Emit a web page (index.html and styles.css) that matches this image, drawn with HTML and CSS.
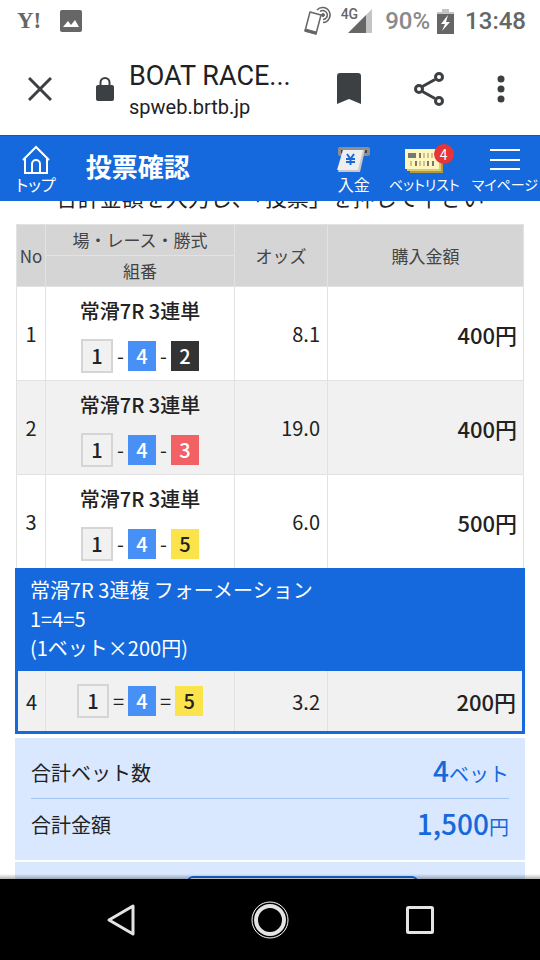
FILE: index.html
```
<!DOCTYPE html>
<html lang="ja">
<head>
    <meta charset="UTF-8">
    <meta name="viewport" content="width=device-width, initial-scale=1.0">
    <title>投票確認</title>
    <link rel="stylesheet" href="styles.css">
</head>
<body>
    <div class="status-bar">
        <span class="yahoo">Y!</span>
        <svg class="photo" width="22" height="22" viewBox="0 0 22 22">
            <rect width="22" height="22" rx="2" fill="#666"/>
            <path d="M3 17l5-6 3 4 4-5 4 7z" fill="#fff"/>
        </svg>
        <span class="spacer"></span>
        <svg width="30" height="30" viewBox="0 0 30 30" fill="none" stroke="#666">
            <path d="M17 5.5a4.5 4.5 0 1 1 3 8M14 4a7.5 7.5 0 1 1 6 12.500" stroke-width="1.5"/>
            <path d="M7 6l11 3-5 19-11-3z" stroke-width="1.5" stroke-linejoin="round" fill="#fff"/>
            <path d="M2.500 23l11 3-.5 2-11-3z" fill="#666"/>
            <circle cx="20" cy="9" r="1.500" fill="#666"/>
        </svg>
        <span class="network">4G</span>
        <svg width="25" height="24" viewBox="0 0 25 24">
            <path d="M18 6l6-6v24h-6z" fill="#c4c4c4"/>
            <path d="M0 24L18 6v18z" fill="#666"/>
        </svg>
        <span class="percent">90%</span>
        <svg class="battery" width="17" height="25" viewBox="0 0 17 25">
            <path d="M5 0h7v3h5v5H0V3h5z" fill="#c4c4c4"/>
            <path d="M0 5h17v20H0z" fill="#666"/>
            <path d="M11 6L4 15h4l-3 7 8-9H9z" fill="#fff"/>
        </svg>
        <span class="clock">13:48</span>
    </div>

    <div class="browser-bar">
        <button type="button" class="close" aria-label="閉じる">
            <svg width="24" height="24" viewBox="0 0 24 24" fill="none" stroke="#3c4043" stroke-width="3">
                <path d="M1 1l22 22M23 1L1 23"/>
            </svg>
        </button>
        <svg class="lock" width="18" height="24" viewBox="0 0 18 24">
            <rect y="8" width="18" height="16" rx="2" fill="#3c4043"/>
            <path d="M4.5 9V5.5a4.5 4.5 0 0 1 9 0V9" fill="none" stroke="#3c4043" stroke-width="2"/>
        </svg>
        <div class="address">
            <div class="page-title">BOAT RACE...</div>
            <div class="page-host">spweb.brtb.jp</div>
        </div>
        <div class="browser-actions">
            <button type="button" aria-label="ブックマーク">
                <svg width="24" height="31" viewBox="0 0 24 31">
                    <path d="M3 0h18a3 3 0 0 1 3 3v28l-12-5-12 5V3a3 3 0 0 1 3-3z" fill="#3c4043"/>
                </svg>
            </button>
            <button type="button" aria-label="共有">
                <svg width="32" height="34" viewBox="0 0 32 34" fill="none" stroke="#3c4043" stroke-width="3">
                    <path d="M8.5 15L22 7.5M8.5 19L22 26.5"/>
                    <circle cx="6" cy="17" r="3.5"/>
                    <circle cx="26" cy="5" r="3.5"/>
                    <circle cx="26" cy="29" r="3.5"/>
                </svg>
            </button>
            <button type="button" aria-label="メニュー">
                <svg width="8" height="28" viewBox="0 0 8 28" fill="#3c4043">
                    <circle cx="4" cy="4" r="3.5"/>
                    <circle cx="4" cy="14" r="3.5"/>
                    <circle cx="4" cy="24" r="3.5"/>
                </svg>
            </button>
        </div>
    </div>

    <header class="app-header">
        <a href="#" class="nav-item home">
            <svg width="28" height="29" viewBox="0 0 28 29" fill="none" stroke="#fff" stroke-width="2">
                <path d="M1 15L14 2l13 13M3 13v15h22V13M10 28v-9a4 4 0 0 1 8 0v9"/>
            </svg>
            <span>トップ</span>
        </a>
        <h1>投票確認</h1>
        <nav class="menu">
            <a href="#" class="nav-item deposit">
                <svg width="34" height="29" viewBox="0 0 34 29">
                    <rect x="1" y="2" width="32" height="9" rx="2" fill="#8f8f8f"/>
                    <rect x="4" y="5" width="26" height="3" fill="#444"/>
                    <path d="M6 5h22l-5 22H1z" fill="#c8c8c8"/>
                    <path d="M6 5h20l-5 20H0z" fill="#eee"/>
                    <path d="M10 9l3.5 5L17 9M9 14h9M9 17h9M13.5 14v6" fill="none" stroke="#1669dc" stroke-width="2"/>
                </svg>
                <span>入金</span>
            </a>
            <a href="#" class="nav-item small-label">
                <svg width="44" height="29" viewBox="0 0 44 29">
                    <path d="M8 10h33v18H8z" fill="#b39b3c"/>
                    <path d="M5 8h34v18H5z" fill="#dcc970"/>
                    <path d="M3 4h34v20H3z" fill="#fff6bf"/>
                    <path d="M6 8h8v5H6zM17 8h2v5h-2zM13 16h2v5h-2zM25 16h2v5h-2zM30 16h2v5h-2z" fill="#777"/>
                    <path d="M21 8h2v5h-2zM25 8h2v5h-2zM29 8h2v5h-2zM8 16h2v5H8zM17 16h2v5h-2zM21 16h2v5h-2z" fill="#ccc391"/>
                </svg>
                <b class="badge">4</b>
                <span>ベットリスト</span>
            </a>
            <a href="#" class="nav-item small-label">
                <svg width="30" height="29" viewBox="0 0 30 29" stroke="#fff" stroke-width="2">
                    <path d="M0 5h30M0 15h30M0 24h30"/>
                </svg>
                <span>マイページ</span>
            </a>
        </nav>
    </header>

    <main>
        <p class="notice">合計金額を入力し、「投票」を押して下さい</p>

        <table class="bets">
            <colgroup>
                <col class="col-no">
                <col class="col-race">
                <col class="col-odds">
                <col>
            </colgroup>
            <thead>
                <tr>
                    <th rowspan="2">No</th>
                    <th>場・レース・勝式</th>
                    <th rowspan="2">オッズ</th>
                    <th rowspan="2">購入金額</th>
                </tr>
                <tr>
                    <th>組番</th>
                </tr>
            </thead>
            <tbody>
                <tr>
                    <td>1</td>
                    <td class="race">
                        <div class="race-name">常滑7R 3連単</div>
                        <div class="combo"><b class="boat n1">1</b>-<b class="boat n4">4</b>-<b class="boat n2">2</b></div>
                    </td>
                    <td class="odds">8.1</td>
                    <td class="amount">400円</td>
                </tr>
                <tr class="even">
                    <td>2</td>
                    <td class="race">
                        <div class="race-name">常滑7R 3連単</div>
                        <div class="combo"><b class="boat n1">1</b>-<b class="boat n4">4</b>-<b class="boat n3">3</b></div>
                    </td>
                    <td class="odds">19.0</td>
                    <td class="amount">400円</td>
                </tr>
                <tr>
                    <td>3</td>
                    <td class="race">
                        <div class="race-name">常滑7R 3連単</div>
                        <div class="combo"><b class="boat n1">1</b>-<b class="boat n4">4</b>-<b class="boat n5">5</b></div>
                    </td>
                    <td class="odds">6.0</td>
                    <td class="amount">500円</td>
                </tr>
            </tbody>
            <tbody class="formation">
                <tr>
                    <td colspan="4" class="formation-head">常滑7R 3連複 フォーメーション<br>1=4=5<br>(1ベット×200円)</td>
                </tr>
                <tr class="even">
                    <td>4</td>
                    <td class="race">
                        <div class="combo"><b class="boat n1">1</b>=<b class="boat n4">4</b>=<b class="boat n5">5</b></div>
                    </td>
                    <td class="odds">3.2</td>
                    <td class="amount">200円</td>
                </tr>
            </tbody>
        </table>

        <dl class="summary">
            <div class="summary-row">
                <dt>合計ベット数</dt>
                <dd><b>4</b>ベット</dd>
            </div>
            <div class="summary-row">
                <dt>合計金額</dt>
                <dd><b>1,500</b>円</dd>
            </div>
        </dl>

        <div class="vote">
            <button type="button" class="vote-button" aria-label="投票"></button>
        </div>
    </main>

    <div class="system-nav">
        <button type="button" aria-label="戻る">
            <svg width="38" height="38" viewBox="0 0 38 38" fill="none" stroke="#e4e4e4" stroke-width="3" stroke-linejoin="round">
                <path d="M32 5v28L8 19z"/>
            </svg>
        </button>
        <button type="button" aria-label="ホーム">
            <svg width="38" height="38" viewBox="0 0 38 38" fill="none">
                <circle cx="19" cy="19" r="18" stroke="#fff"/>
                <circle cx="19" cy="19" r="14" stroke="#e4e4e4" stroke-width="4"/>
            </svg>
        </button>
        <button type="button" aria-label="アプリ履歴">
            <svg width="38" height="38" viewBox="0 0 38 38">
                <rect x="6.5" y="6.5" width="25" height="25" rx="1" fill="none" stroke="#e4e4e4" stroke-width="3"/>
            </svg>
        </button>
    </div>
</body>
</html>
```

FILE: styles.css
```
* {
    box-sizing: border-box;
}

body {
    margin: 0;
    height: 100vh;
    display: flex;
    flex-direction: column;
    overflow: hidden;
    background-color: white;
    color: #222;
    font-family: "Noto Sans CJK JP", sans-serif;
    font-size: 20px;
}

button {
    padding: 0;
    border: none;
    background: none;
    cursor: pointer;
}

svg {
    display: block;
}

/* phone status bar */
.status-bar {
    display: flex;
    align-items: center;
    height: 42px;
    padding: 0 14px 0 17px;
    color: #666;
    font-family: Roboto, sans-serif;
    font-weight: 500;
    font-size: 24px;
}

.yahoo {
    width: 27px;
    font-family: "Liberation Serif", serif;
    font-weight: 700;
    font-size: 23px;
}

.photo {
    margin-left: 16px;
}

.spacer {
    flex: 1;
}

.network {
    margin: 0 -10px 14px 8px;
    font-size: 14px;
    line-height: 14px;
}

.percent {
    margin-left: 12px;
    color: #8a8a8a;
}

.battery {
    margin: 0 11px 0 7px;
}

/* browser toolbar */
.browser-bar {
    display: flex;
    align-items: center;
    height: 93px;
    padding: 0 35px 0 28px;
    font-family: Roboto, sans-serif;
}

.lock {
    margin: 0 15px 0 44px;
}

.address {
    flex: 1;
    padding-top: 4px;
    color: #202124;
}

.page-title {
    font-size: 27px;
    line-height: 32px;
}

.page-host {
    font-size: 20px;
    line-height: 30px;
}

.browser-actions {
    display: flex;
    align-items: center;
    gap: 52px;
}

/* site header */
.app-header {
    display: flex;
    height: 66px;
    padding: 0 2px 0 16px;
    border-top: 1px solid #1557b4;
    background-color: #1669dc;
    color: white;
}

h1 {
    margin: 0 0 0 30px;
    font-size: 26px;
    line-height: 60px;
}

.menu {
    display: flex;
    gap: 12px;
    margin-left: auto;
}

.nav-item {
    position: relative;
    display: flex;
    flex-direction: column;
    align-items: center;
    padding-top: 9px;
    color: white;
    font-size: 16px;
    line-height: 20px;
    text-decoration: none;
    white-space: nowrap;
    font-feature-settings: "palt";
}

.small-label {
    font-size: 14px;
}

.deposit {
    margin-right: 6px;
}

.badge {
    position: absolute;
    top: 8px;
    right: 6px;
    width: 20px;
    height: 20px;
    border-radius: 50%;
    background-color: #e53538;
    font-size: 14px;
    font-weight: 400;
    text-align: center;
}

/* page content */
main {
    position: relative;
    flex: 1;
    min-height: 0;
    overflow: hidden;
    padding: 0 15px;
}

main::after {
    content: "";
    position: absolute;
    left: 0;
    right: 0;
    bottom: 0;
    height: 5px;
    background: linear-gradient(transparent, rgba(0, 0, 0, 0.3));
}

.notice {
    margin: -19px 0 14px;
    font-size: 22px;
    line-height: 28px;
    text-align: center;
}

.bets {
    width: 100%;
    border-collapse: collapse;
    table-layout: fixed;
}

.col-no {
    width: 29px;
}

.col-race {
    width: 189px;
}

.col-odds {
    width: 93px;
}

.bets th,
.bets td {
    padding: 0;
    border: 1px solid #e2e2e2;
    text-align: center;
}

.bets th {
    height: 31px;
    background-color: #d5d5d5;
    color: #444;
    font-size: 17px;
    font-weight: 400;
    line-height: 28px;
}

.even {
    background-color: #f1f1f1;
}

.race-name {
    padding: 9px 0 14px;
    font-weight: 500;
    line-height: 29px;
}

.combo {
    display: flex;
    justify-content: center;
    align-items: center;
    gap: 4px;
    padding-bottom: 7px;
    line-height: 30px;
}

.boat {
    width: 28px;
    font-weight: 500;
    line-height: 30px;
}

.n1 {
    width: 32px;
    border: 2px solid #d5d5d5;
    background-color: #f1f1f1;
}

.n2 {
    background-color: #333;
    color: white;
}

.n3 {
    background-color: #f26163;
    color: white;
}

.n4 {
    background-color: #488ff6;
    color: white;
}

.n5 {
    background-color: #fae34b;
}

.bets .odds {
    padding-right: 7px;
    text-align: right;
}

.bets .amount {
    padding-right: 6px;
    font-size: 22px;
    font-weight: 500;
    text-align: right;
}

.formation {
    border: 3px solid #1669dc;
}

.bets .formation-head {
    padding: 4px 12px 8px;
    border-color: #1669dc;
    background-color: #1669dc;
    color: white;
    line-height: 29px;
    text-align: left;
}

.formation .combo {
    padding: 13px 0;
}

.summary {
    margin: 4px 0 2px;
    padding: 8px 16px 10px;
    background-color: #d9e8ff;
}

.summary-row {
    display: flex;
    justify-content: space-between;
    align-items: center;
    height: 52px;
}

.summary-row + .summary-row {
    border-top: 1px solid #a3c5f5;
}

.summary dd {
    margin: 0;
    color: #1669dc;
    line-height: 40px;
}

.summary dd b {
    font-size: 28px;
    font-weight: 500;
}

.vote {
    display: flex;
    justify-content: center;
    padding: 14px;
    background-color: #d9e8ff;
}

.vote-button {
    width: 48%;
    height: 60px;
    margin-left: 65px;
    border: 2px solid #1669dc;
    border-radius: 6px;
    background-color: white;
}

/* phone navigation buttons */
.system-nav {
    display: flex;
    justify-content: center;
    align-items: center;
    gap: 112px;
    height: 81px;
    background-color: black;
}
```
